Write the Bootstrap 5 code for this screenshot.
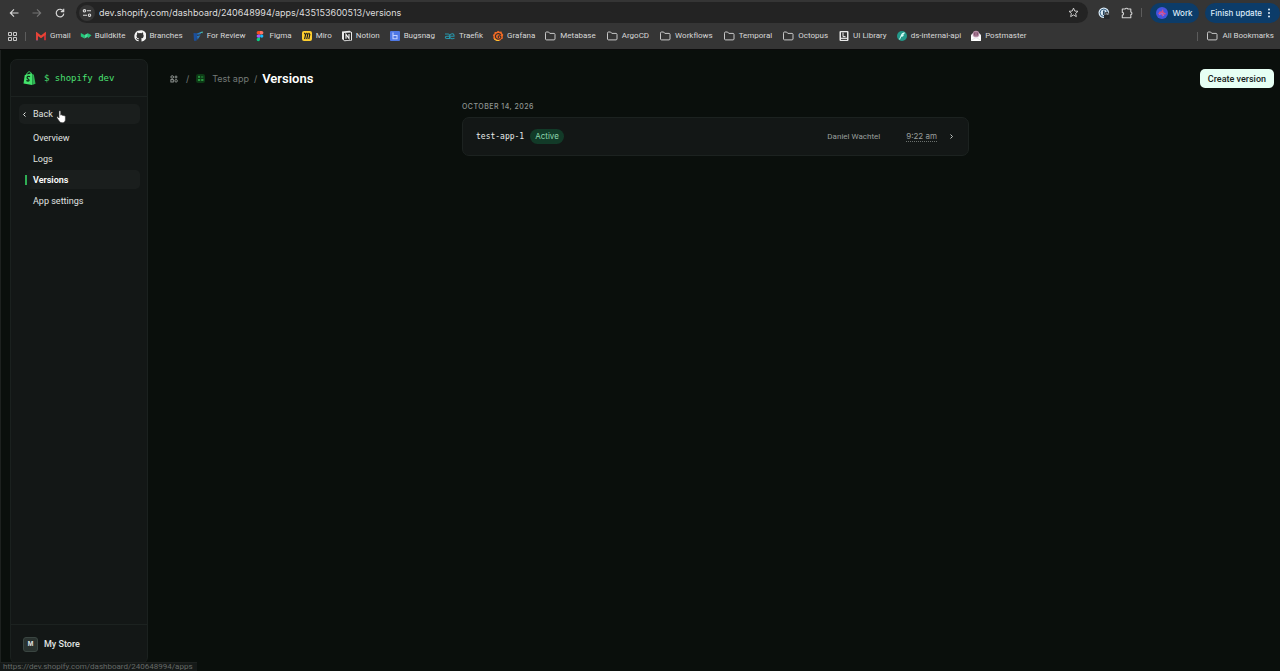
<!DOCTYPE html>
<html lang="en" data-bs-theme="dark">
<head>
<meta charset="utf-8">
<meta name="viewport" content="width=device-width, initial-scale=1">
<title>Versions</title>
<link rel="stylesheet" href="https://cdn.jsdelivr.net/npm/bootstrap@5.3.0/dist/css/bootstrap.min.css">
<style>
  body { background: #0a0f0c; color: #e0e4e2; font-family: Roboto, "Liberation Sans", sans-serif; font-size: 9px; line-height: 12px; }
  a { color: inherit; text-decoration: none; }
  svg { display: block; flex: none; }
  .inter { font-family: Inter, "Liberation Sans", sans-serif; }
  .mono { font-family: "DejaVu Sans Mono", monospace; }
  .chrome { background: #353535; border-bottom: 1px solid #0b0b0b; color: #d8d8d8; }
  .toolbar { height: 25px; padding: 0 0 0 8px; }
  .tool { border: 0; background: none; padding: 0; color: #d8d8d8; line-height: 0; }
  .toolbar .next { margin-left: 11px; }
  .address { background: #232323; border-radius: 11px; height: 21px; padding: 0 9px 0 3px; margin: 0 10px; }
  .address input { background: none; border: 0; outline: 0; color: #dedede; padding: 0; font-size: 9px; min-width: 0; }
  .site { width: 16px; height: 16px; border-radius: 50%; background: #353535; }
  .pill { background: #0c3c69; border: 0; border-radius: 11px; height: 20px; color: #dcebfa; font-size: 8px; font-weight: 500; padding: 0 6px; }
  .pill.update { margin-left: 6px; padding-right: 8px; }
  .bookmarks { height: 24px; font-size: 8px; padding: 0 6px 2px 8px; }
  .bookmarks a { display: flex; align-items: center; gap: 3px; margin-right: 9px; }
  .bookmarks a.dir { gap: 4px; margin-right: 10px; }
  .rule { width: 1px; height: 9px; background: #5c5c5c; }
  .rule.first { margin: 0 9px 0 8px; }
  .shell { min-height: 0; border-left: 1px solid #1d211f; }
  .side { width: 138px; margin: 9px 0 7px 9px; background: #131716; border: 1px solid #1b211f; border-radius: 7px; }
  .brand { height: 37px; padding: 0 12px; gap: 8px; border-bottom: 1px solid #1c2220; color: #4be073; }
  .menu { padding: 7px 7px 0 8px; }
  .menu a { height: 19px; margin-bottom: 2px; padding-left: 14px; border-radius: 5px; display: flex; align-items: center; }
  .menu a.back { height: 20px; margin-bottom: 4px; padding-left: 3px; gap: 6px; background: #1a1e1d; position: relative; }
  .menu a.here { margin-left: 6px; padding-left: 0; gap: 6px; background: linear-gradient(90deg, #131716, #1a1e1d 8px); color: #fff; font-weight: 600; }
  .menu a.here::before { content: ""; width: 2px; height: 10px; background: #2fae54; }
  .hand { position: absolute; left: 37px; top: 6px; }
  .store { height: 39px; padding: 0 12px; gap: 6px; border-top: 1px solid #1c2220; font-weight: 500; }
  .tile { width: 15px; height: 15px; border-radius: 3px; background: #29322f; border: 1px solid #3a4541; font-size: 6px; font-weight: 700; }
  .page { padding: 19px 6px 0 9px; }
  .crumbs { gap: 5px; padding-left: 13px; color: #747a77; }
  .crumbs h1 { font-size: 13px; line-height: 18px; font-weight: 600; color: #fff; margin: 0; }
  .crumbs .start { color: #9ba09d; margin-right: 3px; }
  .crumbs .app { margin-left: 2px; gap: 7px; }
  .create { background: #e6fff4; color: #17221c; border: 0; border-radius: 5px; height: 19px; padding: 0 8px; font-size: 9px; font-weight: 500; }
  .feed { max-width: 507px; width: 100%; margin: 13px auto 0; font-size: 8px; color: #9a9f9c; }
  .feed h2 { font-size: 7px; line-height: 12px; letter-spacing: .07em; margin: 0 0 4px; font-weight: 500; color: #8f9592; }
  .entry { background: #131716; border: 1px solid #1c2220; border-radius: 7px; height: 39px; padding: 0 14px 0 13px; }
  .entry .mono { color: #e8ecea; }
  .state { background: #123a28; color: #8fd6ae; border-radius: 8px; height: 15px; line-height: 15px; padding: 0 5px; margin-left: 6px; }
  .hour { border-bottom: 1px dotted #6b716e; line-height: 10px; margin: 0 12px 0 26px; }
  .hint { position: absolute; left: 0; bottom: 0; background: #151918; border-top: 1px solid #1d211f; color: #656967; font-size: 8px; line-height: 8px; padding: 0 4px 0 3px; }
</style>
<script src="https://cdn.jsdelivr.net/npm/bootstrap@5.3.0/dist/js/bootstrap.bundle.min.js"></script>
</head>
<body class="d-flex flex-column vh-100 overflow-hidden position-relative">
<svg width="0" height="0" class="position-absolute" aria-hidden="true">
  <symbol id="dir" viewBox="0 0 12 12"><path d="M1.500 3.200c0-.7.3-1.200.9-1.200h2.200l1.200 1.400H10c.6 0 1 .4 1 1v4.600c0 .5-.4.900-1 .9H2.500c-.6 0-1-.4-1-.9z" fill="none" stroke="#c8c8c8"/></symbol>
  <symbol id="apps" viewBox="0 0 8 8"><g fill="none" stroke="currentColor" stroke-width=".9"><circle cx="2.200" cy="2" r="1.300"/><rect x=".9" y="4.600" width="2.400" height="2.400"/><rect x="4.900" y="4.600" width="2.400" height="2.400" rx="1"/><path d="M4.500 2h3M6 .5v3"/></g></symbol>
</svg>

<header class="chrome flex-shrink-0">
  <div class="toolbar d-flex align-items-center">
    <button class="tool" aria-label="Back"><svg width="12" height="12" viewBox="0 0 12 12" fill="none" stroke="currentColor" stroke-width="1.100"><path d="M10.500 6H2.500M6 2.300L2.300 6 6 9.700"/></svg></button>
    <button class="tool next" aria-label="Forward"><svg width="12" height="12" viewBox="0 0 12 12" fill="none" stroke="#757575" stroke-width="1.100"><path d="M1.500 6h8M6 2.300L9.700 6 6 9.700"/></svg></button>
    <button class="tool next" aria-label="Reload"><svg width="12" height="12" viewBox="0 0 12 12" fill="none" stroke="currentColor" stroke-width="1.200"><path d="M9.400 4.300A3.800 3.800 0 1 0 9.800 6.600M9.700 1.800v2.900H6.800"/></svg></button>
    <div class="address d-flex align-items-center flex-grow-1">
      <span class="site d-flex align-items-center justify-content-center me-1"><svg width="10" height="10" viewBox="0 0 10 10" fill="none" stroke="#ddd" stroke-width="1.100"><circle cx="2.500" cy="2.800" r="1.200"/><path d="M5 2.800h4M1 7.200h4"/><circle cx="7.500" cy="7.200" r="1.200"/></svg></span>
      <input class="inter flex-grow-1" type="text" aria-label="Address" value="dev.shopify.com/dashboard/240648994/apps/435153600513/versions">
      <svg width="11" height="11" viewBox="0 0 12 12" fill="none" stroke="#d8d8d8" stroke-linejoin="round"><path d="M6 1.200l1.400 3.200 3.500.3-2.600 2.300.8 3.500L6 8.700l-3.100 1.800.8-3.500L1.100 4.700l3.500-.3z"/></svg>
    </div>
    <button class="tool" aria-label="Password manager"><svg width="12" height="12" viewBox="0 0 12 12"><circle cx="5.800" cy="5.800" r="5.300" fill="#dcecf8"/><circle cx="5.800" cy="5.800" r="3.700" fill="none" stroke="#365e81"/><path d="M5.800 3.500v4.500" stroke="#26445f" stroke-width="1.700"/><path d="M6.800 8V6.600a1.900 1.900 0 0 1 3.800 0V8h.9v3.800H6V8z" fill="#25292d"/><path d="M8 8V6.800a.7.7 0 0 1 1.500 0V8" stroke="#ddd" fill="none" stroke-width=".6"/></svg></button>
    <button class="tool next" aria-label="Extensions"><svg width="12" height="12" viewBox="0 0 12 12" fill="none" stroke="#d2d2d2" stroke-width="1.100" stroke-linejoin="round"><path d="M1.300 2h2.900C4.200.9 6.800.9 6.800 2h3v3c1.500 0 1.500 2.600 0 2.600v3.200H1.300V8c1.700 0 1.700-2.600 0-2.600z"/></svg></button>
    <span class="rule flex-shrink-0 mx-2"></span>
    <button class="pill inter d-flex align-items-center gap-1"><svg width="12" height="12" viewBox="0 0 12 12"><circle cx="6" cy="6" r="6" fill="#4554df"/><path d="M2 7l2-3 1 1 2-3 .5 3 3 2-3 .7-1 2-1-2z" fill="#d44d86"/><path d="M3 8l3-2 2 3" stroke="#8e6cf2" fill="none"/></svg>Work</button>
    <button class="pill update inter d-flex align-items-center">Finish update<svg class="ms-1" width="6" height="10" viewBox="0 0 6 10" fill="#e2effb"><circle cx="3" cy="1.500" r="1"/><circle cx="3" cy="5" r="1"/><circle cx="3" cy="8.500" r="1"/></svg></button>
  </div>
  <nav class="bookmarks d-flex align-items-center text-nowrap" aria-label="Bookmarks">
    <button class="tool" aria-label="Apps"><svg width="9" height="9" viewBox="0 0 9 9" fill="none" stroke="#c8c8c8"><path d="M.5.500h3v3h-3zM5.500.500h3v3h-3zM.5 5.500h3v3h-3zM5.500 5.500h3v3h-3z"/></svg></button>
    <span class="rule first"></span>
    <a href="#"><svg width="12" height="12" viewBox="0 0 12 12"><path d="M1 2.300v8h2V5z" fill="#4285f4"/><path d="M1 2l2 1.500v6.700H1z" fill="#d84440"/><path d="M11 2L9 3.500v6.700h2z" fill="#bd3137"/><path d="M1.200 1.800L6 5.500l4.800-3.700v3L6 8.300 1.200 4.800z" fill="#ea4335"/></svg>Gmail</a>
    <a href="#"><svg width="12" height="12" viewBox="0 0 12 12"><path d="M.8 3l3.700 2v3.500L.8 6.500zM7.800 3.200l3.700 2-3.700 3.300z" fill="#22c878"/><path d="M4.500 5l3.300-1.800v3.500L4.500 8.500z" fill="#45e19b"/></svg>Buildkite</a>
    <a href="#"><svg width="12" height="12" viewBox="0 0 16 16" fill="#f5f5f5"><path d="M8 .5a7.500 7.500 0 0 0-2.400 14.600c.4.100.5-.2.500-.4v-1.400c-2.100.5-2.500-.9-2.500-.9-.3-.9-.8-1.100-.8-1.100-.7-.5.100-.5.100-.5.800.1 1.200.8 1.200.8.700 1.200 1.800.8 2.200.6.100-.5.300-.8.500-1-1.700-.2-3.400-.8-3.400-3.700 0-.8.300-1.500.8-2-.1-.2-.3-1 .1-2 0 0 .6-.2 2 .8a7 7 0 0 1 3.700 0c1.400-1 2-.8 2-.8.4 1 .2 1.800.1 2 .5.5.8 1.200.8 2 0 2.900-1.800 3.500-3.500 3.700.3.300.6.800.6 1.600v2.100c0 .2.100.5.500.4A7.500 7.500 0 0 0 8 .5z"/></svg>Branches</a>
    <a href="#"><svg width="12" height="12" viewBox="0 0 12 12"><path d="M1.500 3l4 .2L4.500 10.800H2z" fill="#1b4f9c"/><path d="M5 3.500l5-2-1.500 2.700-3 .6zM5 6l3.500-.7-3 4.500z" fill="#2878c0"/><path d="M7.500 2.500l3.500-1-.5 1.700z" fill="#48b8a5"/></svg>For Review</a>
    <a href="#"><svg width="12" height="12" viewBox="0 0 12 12"><path d="M6 1H4.300a1.700 1.700 0 0 0 0 3.400H6z" fill="#f24e1e"/><path d="M6 1h1.700a1.700 1.700 0 0 1 0 3.400H6z" fill="#ff7262"/><path d="M6 4.400H4.300a1.700 1.700 0 0 0 0 3.400H6z" fill="#a259ff"/><circle cx="7.700" cy="6.100" r="1.700" fill="#1abcfe"/><path d="M6 7.800H4.300A1.700 1.700 0 1 0 6 9.500z" fill="#0acf83"/></svg>Figma</a>
    <a href="#"><svg width="12" height="12" viewBox="0 0 12 12"><rect x="1" y="1" width="10" height="10" rx="2" fill="#ffd02f"/><path d="M3.300 3l1.300 1.500-1 4.700M5.400 3l1.300 1.500-1 4.700M7.500 3l1.300 1.500-1 4.700" stroke="#1c1c1c" stroke-width="1.200" fill="none"/></svg>Miro</a>
    <a href="#"><svg width="12" height="12" viewBox="0 0 12 12"><path d="M1 1.500l7.500-.8L11 2.300v8.200l-7.500.8L1 9z" fill="#e9e9e9"/><path d="M3 3l7-.5v7.400l-7 .4z" fill="#292929"/><path d="M5 8.800V4.200l3 4.300V4" stroke="#f5f5f5" fill="none" stroke-width="1.100"/></svg>Notion</a>
    <a href="#"><svg width="12" height="12" viewBox="0 0 12 12"><rect x="1" y="1" width="10" height="10" rx="1" fill="#4f78e5"/><path d="M4 2.500v6.300h4V5.500H4" stroke="#c3d0ff" fill="none" stroke-width="1.100"/></svg>Bugsnag</a>
    <a href="#"><svg width="12" height="12" viewBox="0 0 12 12" fill="none" stroke="#2795a9" stroke-width="1.100"><path d="M1 4h3.500c1 0 1 1 1 2v2.500H2.800c-2 0-2-2.300 0-2.300h7.200c.5-3-3-3-4-1M5.500 6c0 3 3 3 5 2.300"/></svg>Traefik</a>
    <a href="#"><svg width="12" height="12" viewBox="0 0 12 12"><path d="M6 .7l1.500 1 2-.1.500 1.700 1.300 1.500-.6 1.700.2 2-1.700.8L7.800 11 6 10.500l-2 .6-1-1.700L1.200 8.600l.3-2L.8 5l1.500-1.200.4-1.900 2 .1z" fill="#f26a25"/><path d="M8.700 5A2.800 2.800 0 1 0 8.500 8c.9-1.300-.2-2.500-1.500-2.200-1.100.2-1 1.800 0 1.700" fill="none" stroke="#3a302a" stroke-width="1.200"/><path d="M2 9l3 1.500H7" stroke="#fbc833" fill="none"/></svg>Grafana</a>
    <a href="#" class="dir"><svg width="12" height="12"><use href="#dir"/></svg>Metabase</a>
    <a href="#" class="dir"><svg width="12" height="12"><use href="#dir"/></svg>ArgoCD</a>
    <a href="#" class="dir"><svg width="12" height="12"><use href="#dir"/></svg>Workflows</a>
    <a href="#" class="dir"><svg width="12" height="12"><use href="#dir"/></svg>Temporal</a>
    <a href="#" class="dir"><svg width="12" height="12"><use href="#dir"/></svg>Octopus</a>
    <a href="#"><svg width="12" height="12" viewBox="0 0 12 12"><rect x="1.500" y="1" width="9" height="10" rx="1" fill="#e8e8e8"/><path d="M3 2.300h6v5.400H3z" fill="#343434"/><path d="M5 2.600v4h2.500" stroke="#eee" fill="none"/><path d="M3 9.400h6" stroke="#343434"/></svg>UI Library</a>
    <a href="#"><svg width="12" height="12" viewBox="0 0 12 12"><circle cx="6" cy="6" r="5" fill="#23998a"/><path d="M3 9.500l2.200-5C6 3 7 2.500 9 2.500L8 4.300 6 5l2-.2-1 1.700-1.700.2L4 9.500z" fill="#d8fff7"/></svg>ds-internal-api</a>
    <a href="#"><svg width="12" height="12" viewBox="0 0 12 12"><path d="M1 5l2-2h6l2 2v6H1z" fill="#f2eef3"/><circle cx="6" cy="4" r="3.200" fill="#b58da5"/><path d="M4.500 2.500v3M6 2v4M7.500 2.500v3" stroke="#713e5a" stroke-width=".7"/><path d="M1 6l5 3 5-3v5H1z" fill="#fff"/><path d="M1 10.500l4-2.500M11 10.500L7 8" stroke="#ccc" stroke-width=".5"/></svg>Postmaster</a>
    <span class="rule ms-auto me-2"></span>
    <a href="#" class="dir me-0"><svg width="12" height="12"><use href="#dir"/></svg>All Bookmarks</a>
  </nav>
</header>

<div class="shell d-flex flex-grow-1">
  <aside class="side d-flex flex-column flex-shrink-0">
    <a href="#" class="brand d-flex align-items-center mono"><svg width="13" height="14" viewBox="0 0 13 14"><path d="M1.800 4L9 2.300V14L.5 12.500z" fill="#43e36b"/><path d="M9.200 2.700l1.600 1 1.700 9-3.300 1.200z" fill="#2eb653"/><path d="M3.500 4C4 1.600 5.500.7 6.500.8c1.200.1 1.600 1.200 1.600 2.500" fill="none" stroke="#43e36b"/><path d="M7 5.700C5.500 5 4 5.500 4.100 6.700c.1 1.200 2.100 1.300 2 2.500-.1 1.100-1.600 1-2.700.2" fill="none" stroke="#11301a" stroke-width="1.300"/></svg>$ shopify dev</a>
    <ul class="menu list-unstyled m-0 flex-grow-1">
      <li><a href="#" class="back"><svg width="5" height="7" viewBox="0 0 5 7" fill="none" stroke="currentColor"><path d="M3.500 1.500l-2 2 2 2"/></svg>Back
        <svg class="hand" width="11" height="14" viewBox="0 0 11 14"><path d="M3 1.500c0-1.100 1.600-1.100 1.700 0v3.600c.4-.5 1.500-.4 1.600.3.500-.4 1.500-.2 1.600.5.700-.3 1.500.1 1.500.9v2.400c0 2.200-1 3.500-3 3.500-1.800 0-2.700-.6-3.400-1.900L1 7.900c-.4-1 .7-1.500 1.400-.7l.6.700z" fill="#fff" stroke="#333" stroke-width=".6"/></svg></a></li>
      <li><a href="#">Overview</a></li>
      <li><a href="#">Logs</a></li>
      <li><a href="#" class="here">Versions</a></li>
      <li><a href="#">App settings</a></li>
    </ul>
    <a href="#" class="store d-flex align-items-center"><span class="tile inter d-flex align-items-center justify-content-center">M</span>My Store</a>
  </aside>

  <main class="page flex-grow-1">
    <div class="d-flex align-items-center justify-content-between">
      <div class="crumbs d-flex align-items-center">
        <a href="#" class="start" aria-label="Apps"><svg width="8" height="8"><use href="#apps"/></svg></a>
        <span class="inter">/</span>
        <a href="#" class="app inter d-flex align-items-center"><svg width="9" height="9" viewBox="0 0 8 8"><rect width="8" height="8" rx="2" fill="#0d3b16"/><g fill="#2b9540"><circle cx="2.700" cy="2.600" r="1"/><path d="M1.700 4.500h2v1.700h-2zM4.600 4.500h2v1.700h-2zM4.500 2.200h2v.8h-2z"/></g></svg>Test app</a>
        <span class="inter">/</span>
        <h1>Versions</h1>
      </div>
      <button class="create">Create version</button>
    </div>
    <section class="feed">
      <h2 class="inter">OCTOBER 14, 2026</h2>
      <a href="#" class="entry d-flex align-items-center">
        <span class="mono">test-app-1</span>
        <span class="state inter">Active</span>
        <span class="ms-auto">Daniel Wachtel</span>
        <time class="hour inter">9:22 am</time>
        <svg width="5" height="7" viewBox="0 0 5 7" fill="none" stroke="#c0c5c2"><path d="M1.500 1.500l2 2-2 2"/></svg>
      </a>
    </section>
  </main>
</div>
<div class="hint">https://dev.shopify.com/dashboard/240648994/apps</div>
</body>
</html>
